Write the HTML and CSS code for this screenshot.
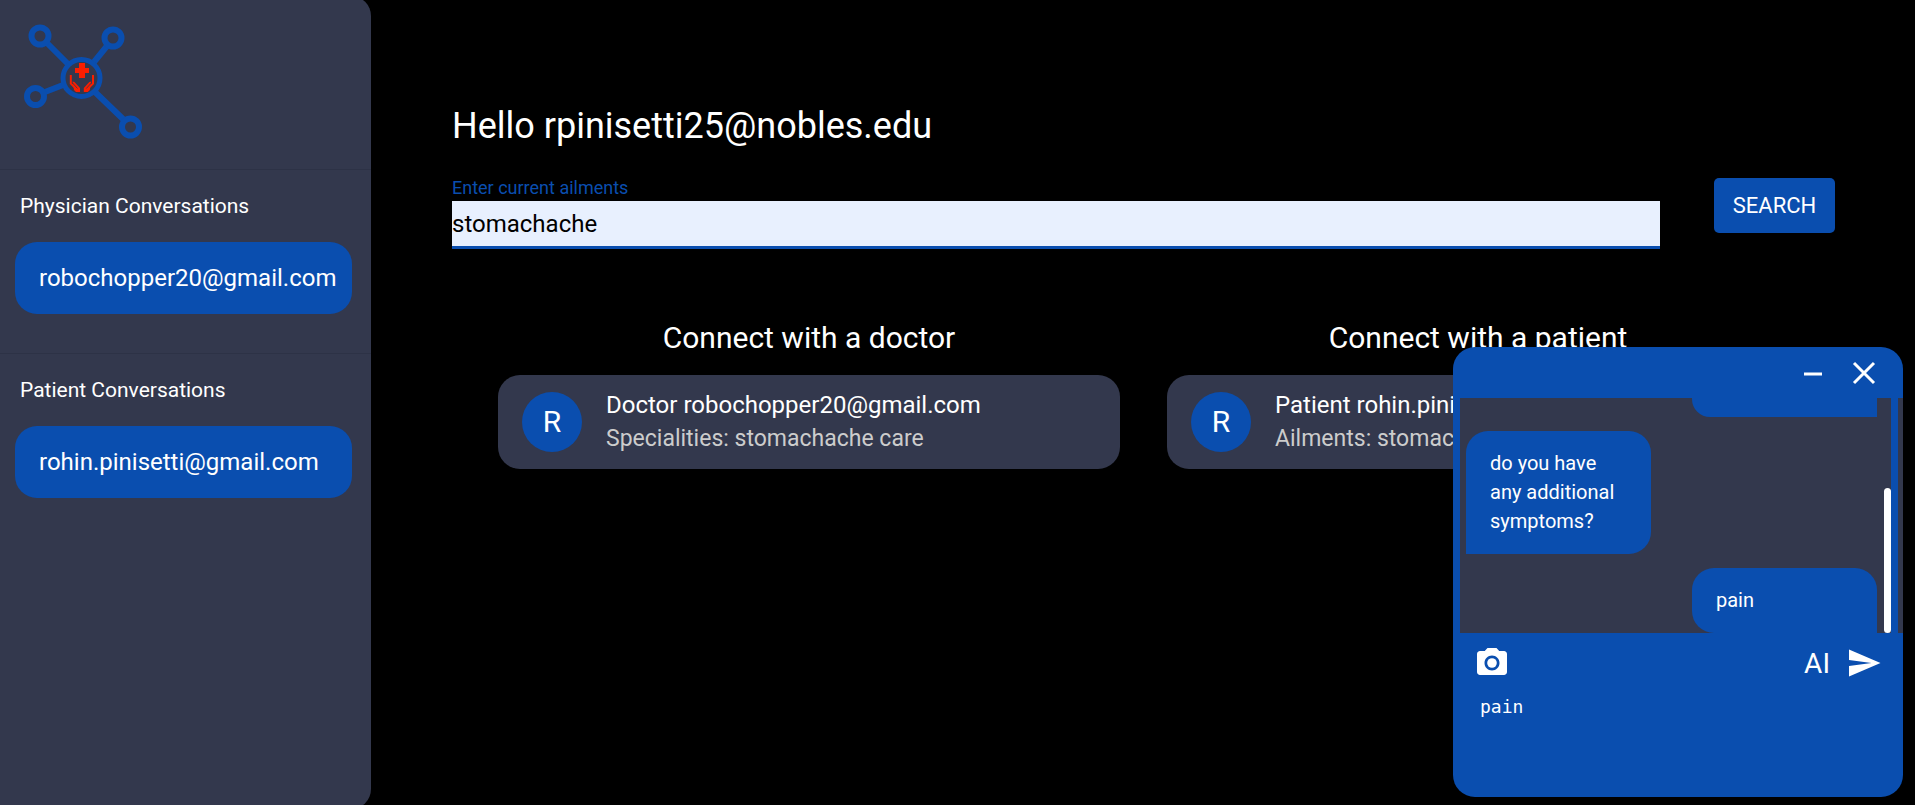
FILE: index.html
```
<!DOCTYPE html>
<html lang="en">
<head>
    <meta charset="UTF-8">
    <meta name="viewport" content="width=device-width, initial-scale=1.0">
    <title>Home</title>
    <link rel="stylesheet" href="styles.css">
</head>
<body>

<div class="page">
    <aside class="sidebar">
        <div class="logo">
            <svg width="120" height="120" viewBox="22 22 120 120" fill="none" stroke="#0a4eaf" role="img" aria-label="Logo">
                <g stroke-width="6">
                    <path d="M47 43L68 64M107 46L94 62M45 92L63 85M95 92L124 120"/>
                    <circle cx="40" cy="36" r="8.500"/>
                    <circle cx="113" cy="38" r="8.500"/>
                    <circle cx="35.500" cy="96.500" r="8.500"/>
                    <circle cx="130.500" cy="127" r="8.500"/>
                </g>
                <circle cx="81.500" cy="78" r="18.500" stroke-width="5"/>
                <path d="M79 63h6v5h4v5h-4v5h-6v-5h-4v-5h4z" fill="#fa1e00" stroke="none"/>
                <path d="M70.800 75v8.500l7.200 7M93 75v8.500l-7.200 7" stroke="#fa1e00" stroke-width="2"/>
                <path d="M72.500 81.500l2 .5 5.500 6v4h-4l-2-2zM91.300 81.500l-2 .5-5.500 6v4h4l2-2z" fill="#fa1e00" stroke="none"/>
                <path d="M72.500 83l5 5.500M91.300 83l-5 5.500" stroke="#33384d" stroke-width=".8"/>
            </svg>
        </div>
        <section class="conversations">
            <h2>Physician Conversations</h2>
            <button class="conversation" type="button">robochopper20@gmail.com</button>
        </section>
        <section class="conversations">
            <h2>Patient Conversations</h2>
            <button class="conversation" type="button">rohin.pinisetti@gmail.com</button>
        </section>
    </aside>

    <main class="content">
        <h1>Hello rpinisetti25@nobles.edu</h1>
        <form class="search">
            <div class="field">
                <label for="ailments">Enter current ailments</label>
                <input type="text" id="ailments" name="ailments" value="stomachache">
            </div>
            <button class="search-btn" type="submit">SEARCH</button>
        </form>

        <div class="results">
            <section class="column">
                <h3>Connect with a doctor</h3>
                <div class="card">
                    <div class="avatar">R</div>
                    <div class="details">
                        <p class="name">Doctor robochopper20@gmail.com</p>
                        <p class="info">Specialities: stomachache care</p>
                    </div>
                </div>
            </section>
            <section class="column">
                <h3>Connect with a patient</h3>
                <div class="card">
                    <div class="avatar">R</div>
                    <div class="details">
                        <p class="name">Patient rohin.pinisetti@gmail.com</p>
                        <p class="info">Ailments: stomachache</p>
                    </div>
                </div>
            </section>
        </div>
    </main>
</div>

<div class="chat">
    <div class="chat-header">
        <button class="icon-btn" type="button" aria-label="Minimize">
            <svg width="32" height="32" viewBox="0 0 32 32"><path d="M7 17h18" stroke="#fff" stroke-width="3"/></svg>
        </button>
        <button class="icon-btn" type="button" aria-label="Close">
            <svg width="32" height="32" viewBox="0 0 32 32"><path d="M6 6l20 20M26 6L6 26" stroke="#fff" stroke-width="3"/></svg>
        </button>
    </div>
    <div class="chat-body">
        <div class="messages">
            <div class="message sent"></div>
            <div class="message received">do you have any additional symptoms?</div>
            <div class="message sent">pain</div>
        </div>
        <div class="scroll-thumb"></div>
    </div>
    <form class="composer">
        <div class="tools">
            <button class="icon-btn" type="button" aria-label="Add photo">
                <svg width="36" height="36" viewBox="0 0 24 24" fill="#fff">
                    <circle cx="12" cy="12" r="3.200"/>
                    <path d="M9 2L7.170 4H4c-1.100 0-2 .9-2 2v12c0 1.100.9 2 2 2h16c1.100 0 2-.9 2-2V6c0-1.100-.9-2-2-2h-3.170L15 2H9zm3 15c-2.760 0-5-2.240-5-5s2.240-5 5-5 5 2.240 5 5-2.240 5-5 5z"/>
                </svg>
            </button>
            <button class="icon-btn ai-btn" type="button">AI</button>
            <button class="icon-btn" type="submit" aria-label="Send">
                <svg width="36" height="36" viewBox="0 0 24 24" fill="#fff"><path d="M2.010 21L23 12 2.010 3 2 10l15 2-15 2z"/></svg>
            </button>
        </div>
        <textarea name="message" aria-label="Message">pain</textarea>
    </form>
</div>

</body>
</html>
```
FILE: styles.css
```
* {
    box-sizing: border-box;
}
body {
    margin: 0;
    background-color: #000;
    color: #fff;
    font-family: Roboto, sans-serif;
}
h1, h2, h3, p {
    margin: 0;
    font-weight: 400;
}
button {
    border: none;
    color: #fff;
    font-family: inherit;
    cursor: pointer;
}
.page {
    display: flex;
    height: 100vh;
    overflow: hidden;
}

/* sidebar */
.sidebar {
    flex: 0 0 371px;
    margin: -4px 0;
    padding-top: 4px;
    background-color: #33384d;
    border-radius: 0 20px 20px 0;
}
.logo {
    height: 169px;
    padding: 22px;
}
.conversations {
    height: 184px;
    padding: 20px 19px 0 15px;
    border-top: 1px solid #2d3246;
}
.conversations h2 {
    padding-left: 5px;
    font-size: 21px;
    line-height: 32px;
}
.conversation {
    display: block;
    width: 100%;
    height: 72px;
    margin-top: 20px;
    padding: 0 0 0 24px;
    border-radius: 22px;
    background-color: #0a4eaf;
    font-size: 24px;
    text-align: left;
}

/* main */
.content {
    flex: 1;
    padding: 104px 80px 0 81px;
}
.content h1 {
    font-size: 36px;
    line-height: 44px;
}
.search {
    display: flex;
    align-items: flex-start;
    gap: 54px;
    margin-top: 30px;
}
.field {
    flex: 1;
}
.field label {
    display: block;
    padding-bottom: 4px;
    color: #0a4eaf;
    font-size: 18px;
    line-height: 19px;
}
.field input {
    display: block;
    width: 100%;
    height: 48px;
    padding: 0;
    border: none;
    border-bottom: 3px solid #0a4eaf;
    outline: none;
    background-color: #e8f0fe;
    font-family: inherit;
    font-size: 24px;
}
.search-btn {
    width: 121px;
    height: 55px;
    padding: 0;
    border-radius: 5px;
    background-color: #0a4eaf;
    font-size: 22px;
}
.results {
    display: grid;
    grid-template-columns: 1fr 1fr;
    gap: 47px;
    margin-top: 71px;
    padding: 0 46px;
}
.column h3 {
    font-size: 30px;
    line-height: 36px;
    text-align: center;
}
.card {
    display: flex;
    align-items: center;
    gap: 24px;
    margin-top: 19px;
    padding: 13px 24px;
    border-radius: 22px;
    background-color: #33384d;
    white-space: nowrap;
}
.avatar {
    flex: 0 0 60px;
    height: 60px;
    border-radius: 50%;
    background-color: #0a4eaf;
    font-size: 30px;
    line-height: 60px;
    text-align: center;
}
.details {
    font-size: 24px;
    line-height: 34px;
}
.info {
    color: #ccc;
    font-size: 23px;
}

/* chat window */
.chat {
    position: fixed;
    right: 12px;
    bottom: 8px;
    width: 450px;
    border-radius: 22px;
    background-color: #0a4eaf;
    overflow: hidden;
}
.chat-header {
    display: flex;
    justify-content: flex-end;
    gap: 19px;
    height: 51px;
    padding: 8px 23px;
}
.icon-btn {
    display: block;
    padding: 0;
    background: none;
}
.icon-btn svg {
    display: block;
}
.chat-body {
    position: relative;
    border-right: 5px solid #33384d;
}
.messages {
    display: flex;
    flex-direction: column;
    justify-content: flex-end;
    gap: 14px;
    height: 235px;
    padding: 0 14px 0 6px;
    border: solid #0a4eaf;
    border-width: 0 7px;
    background-color: #33384d;
    overflow: hidden;
}
.message {
    flex: none;
    width: 185px;
    padding: 18px 24px;
    background-color: #0a4eaf;
    font-size: 20px;
    line-height: 29px;
}
.sent {
    align-self: flex-end;
    border-radius: 22px 22px 0 22px;
}
.received {
    border-radius: 22px 22px 22px 0;
}
.scroll-thumb {
    position: absolute;
    right: 7px;
    bottom: 0;
    width: 7px;
    height: 145px;
    border-radius: 4px;
    background-color: #fff;
}
.composer {
    padding: 12px 21px 0;
}
.tools {
    display: flex;
    align-items: center;
    gap: 16px;
}
.ai-btn {
    margin-left: auto;
    font-size: 28px;
}
.composer textarea {
    display: block;
    width: 100%;
    height: 108px;
    margin-top: 8px;
    padding: 7px 6px;
    border: none;
    outline: none;
    resize: none;
    background: none;
    color: #fff;
    font-family: "DejaVu Sans Mono", monospace;
    font-size: 18px;
}
```
